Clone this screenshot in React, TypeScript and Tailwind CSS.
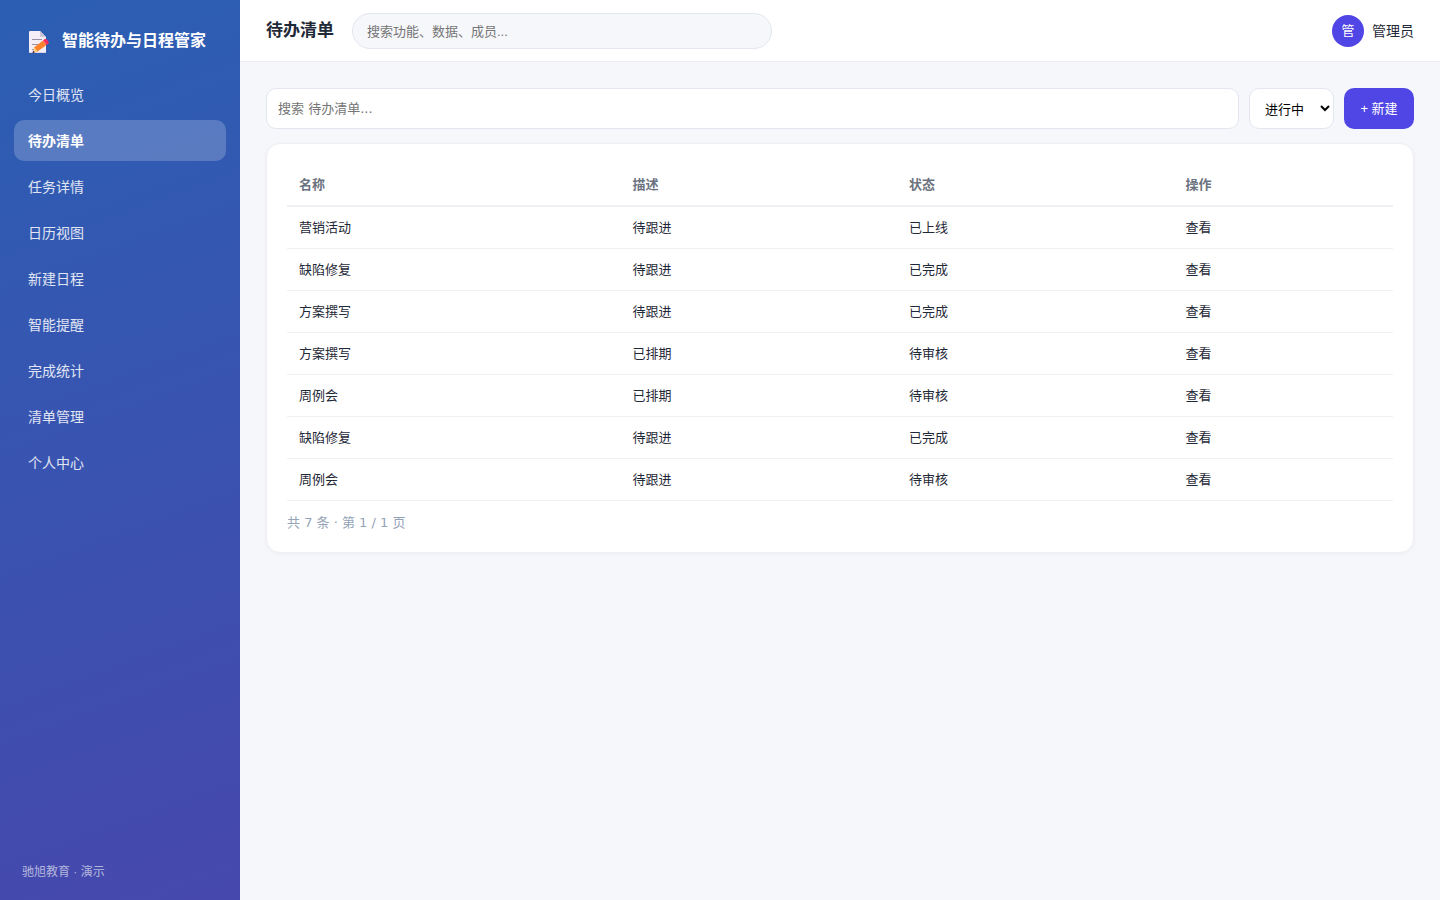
import { useState } from 'react'

const navItems = ['今日概览', '待办清单', '任务详情', '日历视图', '新建日程', '智能提醒', '完成统计', '清单管理', '个人中心']

const rows = [
  { name: '营销活动', desc: '待跟进', status: '已上线' },
  { name: '缺陷修复', desc: '待跟进', status: '已完成' },
  { name: '方案撰写', desc: '待跟进', status: '已完成' },
  { name: '方案撰写', desc: '已排期', status: '待审核' },
  { name: '周例会', desc: '已排期', status: '待审核' },
  { name: '缺陷修复', desc: '待跟进', status: '已完成' },
  { name: '周例会', desc: '待跟进', status: '待审核' },
]

function MemoIcon() {
  return (
    <svg className="h-6 w-6 shrink-0" viewBox="0 0 24 24" aria-hidden="true">
      <path d="M4 2h10l6 6v16H4q-1 0-1-1V3q0-1 1-1z" fill="#f3eef8" />
      <path d="M14 2l6 6h-5q-1 0-1-1z" fill="#cdc4d6" />
      <path d="M6 10.500h10M6 15.500h6M6 20.500h2" stroke="#998ea4" strokeWidth="1" />
      <path d="M3.500 23.600h16.500" stroke="#d3c9dc" strokeWidth=".8" />
      <path d="M8 18.500L17 11.500l3.500 4.500-9 6.500-3.500 1z" fill="#ff822d" />
      <path d="M8.200 18.300l3.500 4.200-4.700 1.300z" fill="#ffce7c" />
      <path d="M6.500 24l.6-2.400 1.800 1.800z" fill="#321b41" />
      <path d="M17 11.500l1.800-1.400q1-.7 1.800.2l2 2.500q.7 1-.2 1.800l-1.900 1.400z" fill="#f92f60" />
    </svg>
  )
}

function App() {
  const [active, setActive] = useState('待办清单')

  return (
    <div className="flex min-h-screen bg-[#f5f7fb] font-['Liberation_Sans','Noto_Sans_CJK_SC',sans-serif] text-sm text-[#1f2937]">
      <aside className="flex w-60 shrink-0 flex-col bg-[linear-gradient(160deg,#2b5fb3,#4748ad)] px-3.5 pt-[29px] pb-4 text-white">
        <div className="mb-[21px] flex h-6 items-center gap-3 px-3">
          <MemoIcon />
          <span className="text-base font-bold whitespace-nowrap">智能待办与日程管家</span>
        </div>
        <nav className="flex flex-col gap-[5px]">
          {navItems.map((item) => (
            <a
              key={item}
              href="#"
              onClick={() => setActive(item)}
              className={
                item === active
                  ? 'rounded-[10px] bg-white/20 px-3.5 pt-[11px] pb-[9px] leading-[21px] font-bold'
                  : 'rounded-[10px] px-3.5 pt-[11px] pb-[9px] leading-[21px] text-white/85'
              }
            >
              {item}
            </a>
          ))}
        </nav>
        <div className="mt-auto px-2 text-xs leading-6 text-white/60">驰旭教育 · 演示</div>
      </aside>

      <div className="flex min-w-0 flex-1 flex-col">
        <header className="flex items-center gap-[18px] border-b border-[#eceef4] bg-white px-[26px] pt-[13px] pb-3">
          <h1 className="text-[17px] font-bold whitespace-nowrap">待办清单</h1>
          <input
            type="search"
            aria-label="搜索功能、数据、成员"
            placeholder="搜索功能、数据、成员..."
            className="h-9 w-full max-w-[420px] rounded-full border border-[#e3e6ef] bg-[#f5f7fb] px-3.5 text-[13px] placeholder:text-[#757575]"
          />
          <div className="ml-auto flex shrink-0 items-center gap-2">
            <span className="flex h-8 w-8 items-center justify-center rounded-full bg-[#4f46e5] text-[13px] text-white">管</span>
            <span>管理员</span>
          </div>
        </header>

        <main className="p-[26px]">
          <div className="mb-3.5 flex h-[41px] gap-2.5">
            <input
              type="search"
              aria-label="搜索 待办清单"
              placeholder="搜索 待办清单..."
              className="min-w-0 flex-1 rounded-[10px] border border-[#e3e6ef] bg-white px-[11px] pt-0.5 font-['DejaVu_Sans','Noto_Sans_CJK_SC',sans-serif] text-[13px] placeholder:text-[#757575]"
            />
            <select
              aria-label="状态"
              className="w-[85px] rounded-[10px] border border-[#e3e6ef] bg-white px-[11px] pt-0.5 text-[13px] text-black"
            >
              <option>进行中</option>
              <option>已完成</option>
            </select>
            <button type="button" className="w-[70px] rounded-[10px] bg-[#4f46e5] pt-0.5 text-[13px] text-white">
              + 新建
            </button>
          </div>

          <section className="rounded-[14px] border border-[#eef0f5] bg-white p-5 shadow-[0_1px_4px_rgba(30,41,59,0.04)]">
            <table className="w-full border-separate border-spacing-0 text-left text-[13px] leading-[21px]">
              <thead>
                <tr className="text-[#6b7280]">
                  <th className="border-b-2 border-[#eef0f4] px-3 py-2.5 font-bold">名称</th>
                  <th className="border-b-2 border-[#eef0f4] px-3 py-2.5 font-bold">描述</th>
                  <th className="border-b-2 border-[#eef0f4] px-3 py-2.5 font-bold">状态</th>
                  <th className="border-b-2 border-[#eef0f4] px-3 py-2.5 font-bold">操作</th>
                </tr>
              </thead>
              <tbody>
                {rows.map((row, i) => (
                  <tr key={i}>
                    <td className="border-b border-[#eef0f4] px-3 py-2.5">{row.name}</td>
                    <td className="border-b border-[#eef0f4] px-3 py-2.5">{row.desc}</td>
                    <td className="border-b border-[#eef0f4] px-3 py-2.5">{row.status}</td>
                    <td className="border-b border-[#eef0f4] px-3 py-2.5">
                      <a href="#">查看</a>
                    </td>
                  </tr>
                ))}
              </tbody>
            </table>
            <p className="mt-3 font-['DejaVu_Sans','Noto_Sans_CJK_SC',sans-serif] text-[13px] leading-[19px] text-[#94a3b8]">
              共 7 条 · 第 1 / 1 页
            </p>
          </section>
        </main>
      </div>
    </div>
  )
}

export default App
